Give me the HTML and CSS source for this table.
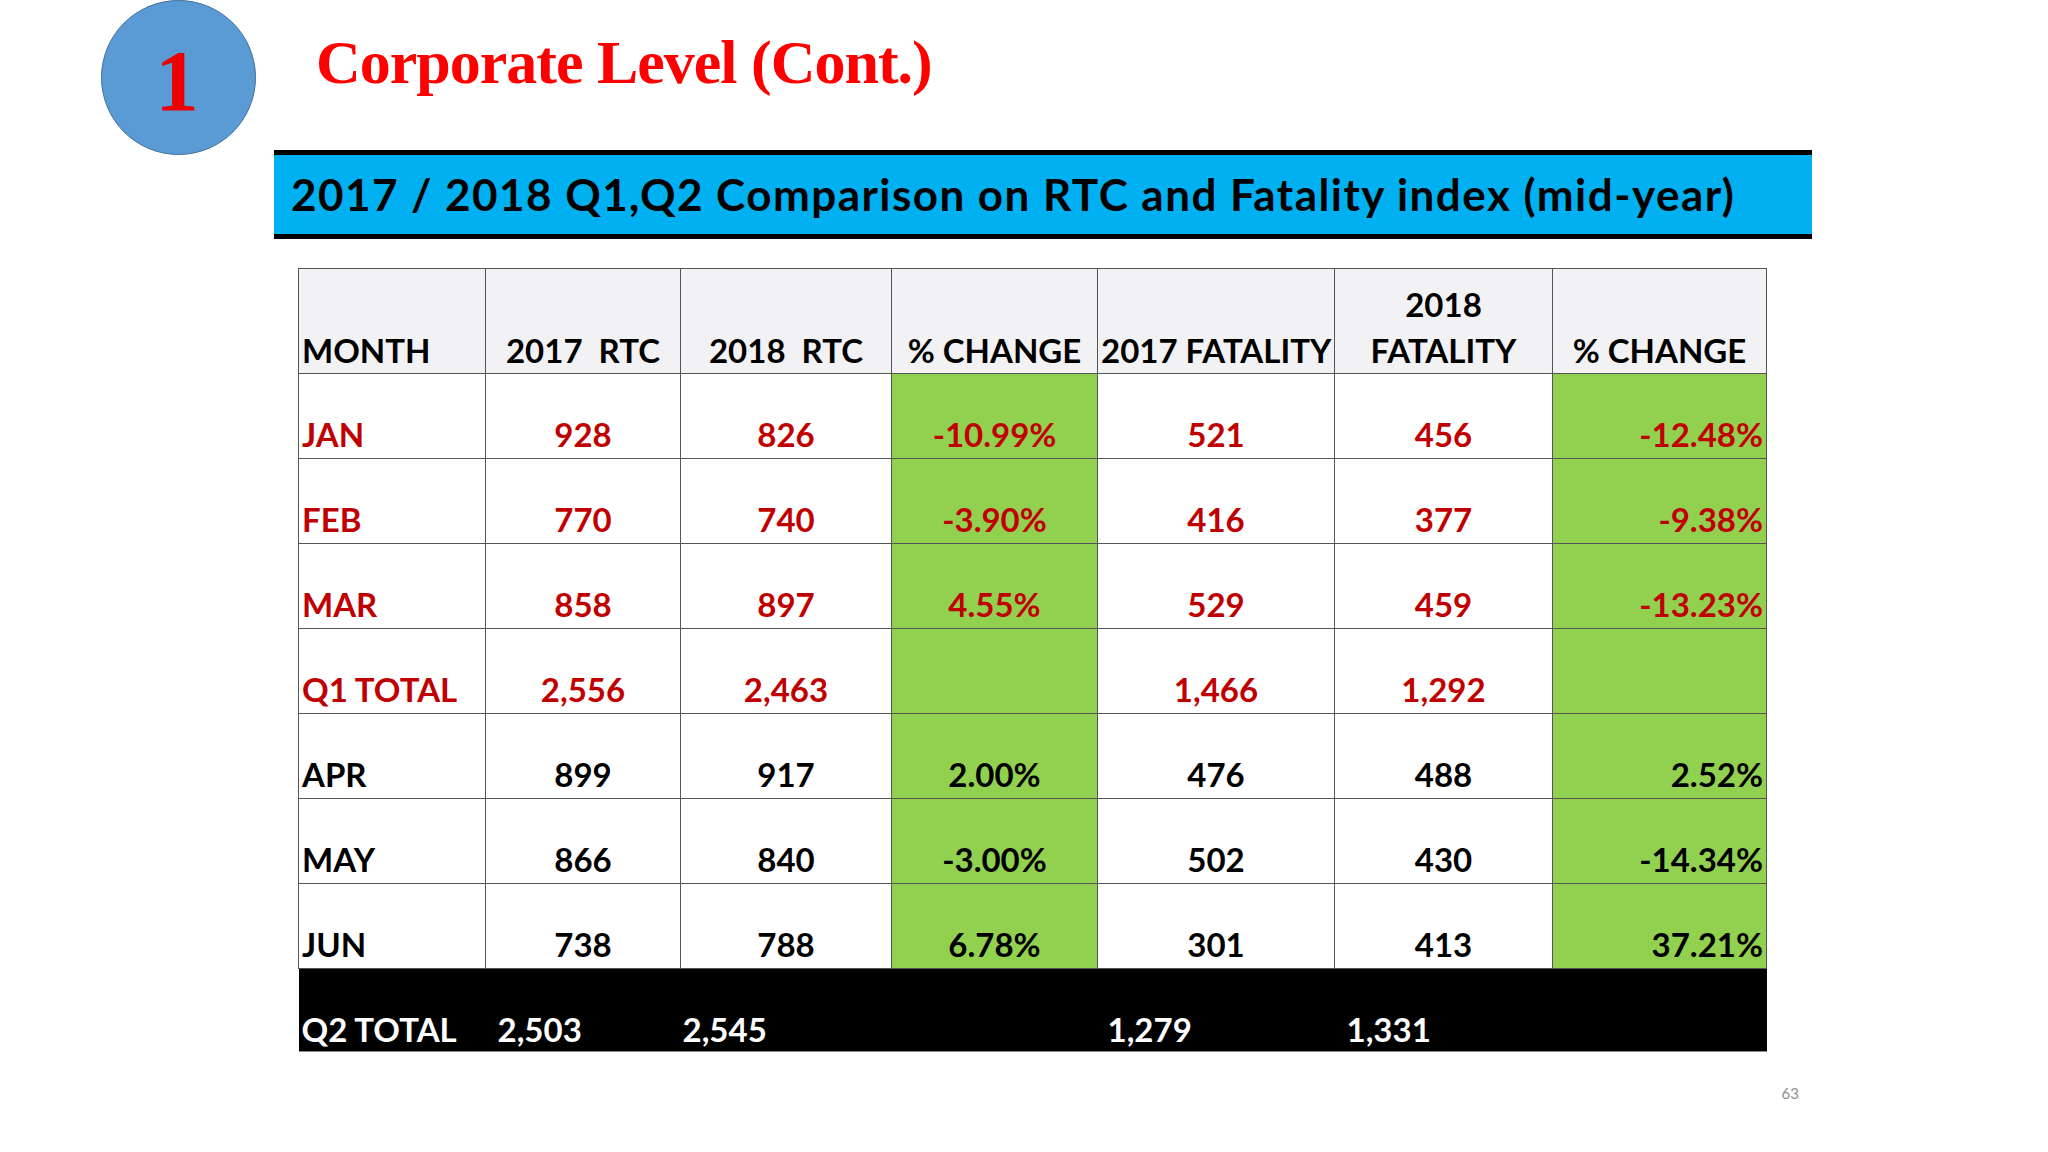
FILE: index.html
```html
<!DOCTYPE html>
<html lang="en">
<head>
<meta charset="utf-8">
<title>Corporate Level (Cont.)</title>
<link rel="stylesheet" href="styles.css">
</head>
<body>
<div class="slide">
  <header class="head">
    <div class="badge"><span>1</span></div>
    <h1 class="title">Corporate Level (Cont.)</h1>
  </header>
  <div class="banner">2017 / 2018 Q1,Q2 Comparison on RTC and Fatality index (mid-year)</div>
  <table class="data">
    <colgroup>
      <col class="c1"><col class="c2"><col class="c3"><col class="c4"><col class="c5"><col class="c6"><col class="c7">
    </colgroup>
    <thead>
      <tr class="hrow">
        <th class="left">MONTH</th>
        <th>2017&nbsp; RTC</th>
        <th>2018&nbsp; RTC</th>
        <th>% CHANGE</th>
        <th>2017 FATALITY</th>
        <th>2018<br>FATALITY</th>
        <th>% CHANGE</th>
      </tr>
    </thead>
    <tbody>
      <tr class="red">
        <td class="left">JAN</td><td>928</td><td>826</td><td class="green">-10.99%</td><td>521</td><td>456</td><td class="green right">-12.48%</td>
      </tr>
      <tr class="red">
        <td class="left">FEB</td><td>770</td><td>740</td><td class="green">-3.90%</td><td>416</td><td>377</td><td class="green right">-9.38%</td>
      </tr>
      <tr class="red">
        <td class="left">MAR</td><td>858</td><td>897</td><td class="green">4.55%</td><td>529</td><td>459</td><td class="green right">-13.23%</td>
      </tr>
      <tr class="red">
        <td class="left">Q1 TOTAL</td><td>2,556</td><td>2,463</td><td class="green"></td><td>1,466</td><td>1,292</td><td class="green right"></td>
      </tr>
      <tr>
        <td class="left">APR</td><td>899</td><td>917</td><td class="green">2.00%</td><td>476</td><td>488</td><td class="green right">2.52%</td>
      </tr>
      <tr>
        <td class="left">MAY</td><td>866</td><td>840</td><td class="green">-3.00%</td><td>502</td><td>430</td><td class="green right">-14.34%</td>
      </tr>
      <tr>
        <td class="left">JUN</td><td>738</td><td>788</td><td class="green">6.78%</td><td>301</td><td>413</td><td class="green right">37.21%</td>
      </tr>
      <tr class="total">
        <td class="left">Q2 TOTAL</td><td class="t-a">2,503</td><td class="t-b">2,545</td><td></td><td class="t-c">1,279</td><td class="t-a">1,331</td><td></td>
      </tr>
    </tbody>
  </table>
  <div class="pagenum">63</div>
</div>
</body>
</html>
```
FILE: styles.css
```css
html, body {
  margin: 0;
  padding: 0;
  background: #ffffff;
}

.slide {
  width: 2048px;
  height: 1152px;
  font-family: "Lato", "Noto Sans", sans-serif;
  overflow: hidden;
}

.head {
  display: flex;
  align-items: flex-start;
  height: 150px;
}

.badge {
  box-sizing: border-box;
  width: 155px;
  height: 155px;
  margin-left: 101px;
  border-radius: 50%;
  background: #5b9bd5;
  border: 1.5px solid #41719c;
  display: flex;
  align-items: center;
  justify-content: center;
  padding-top: 5px;
  padding-right: 3px;
  font: bold 87px/1 "Liberation Serif", "Times New Roman", serif;
  color: #ee0000;
}

.title {
  margin: 31px 0 0 60px;
  font: bold 62px/62px "Liberation Serif", "Times New Roman", serif;
  letter-spacing: -1px;
  color: #ff0000;
}

.banner {
  box-sizing: border-box;
  width: 1538px;
  height: 89px;
  margin-left: 274px;
  border-top: 5px solid #000000;
  border-bottom: 5px solid #000000;
  background: #00b0f0;
  padding-left: 17px;
  font-weight: 700;
  font-size: 44px;
  line-height: 79px;
  letter-spacing: 1.45px;
  color: #000000;
  white-space: nowrap;
}

.data {
  margin: 29px 0 0 298px;
  width: 1468px;
  border-collapse: collapse;
  table-layout: fixed;
  font-weight: 700;
  font-size: 33px;
  line-height: 40px;
  color: #000000;
}

.c1 { width: 187px; }
.c2 { width: 195px; }
.c3 { width: 211px; }
.c4 { width: 206px; }
.c5 { width: 237px; }
.c6 { width: 218px; }
.c7 { width: 214px; }

.data th,
.data td {
  border: 1px solid #555555;
  padding: 0 3px 4px 3px;
  vertical-align: bottom;
  text-align: center;
  white-space: nowrap;
  overflow: visible;
}

.data th {
  font-weight: 700;
  background: #f2f2f4;
  line-height: 46px;
  padding-bottom: 0;
}

.hrow { height: 105px; }

.data tbody tr { height: 85px; }

.data .left { text-align: left; }
.data .right { text-align: right; }

.data td.green { background: #92d050; }

.red td { color: #c00000; }

.data tr.total { height: 83px; }

.data tr.total td {
  background: #000000;
  color: #ffffff;
  border: none;
  border-bottom: 1px solid #8a8a8a;
  text-align: left;
  padding-bottom: 2px;
}

.data tr.total td.t-a { padding-left: 12px; }
.data tr.total td.t-b { padding-left: 2px; }
.data tr.total td.t-c { padding-left: 10px; }

.pagenum {
  width: 1799px;
  margin-top: 32px;
  text-align: right;
  font-size: 15px;
  line-height: 18px;
  color: #8f8f8f;
}
```
